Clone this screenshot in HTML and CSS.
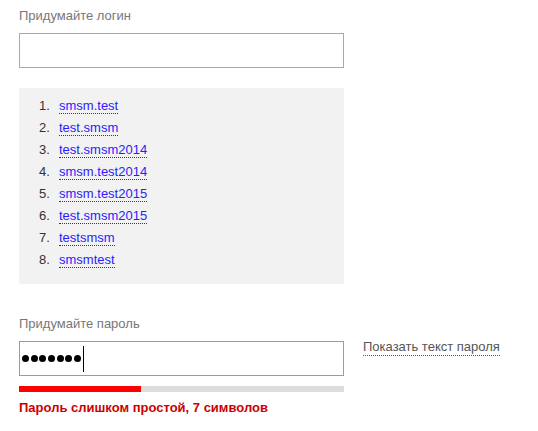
FILE: index.html
```html
<!DOCTYPE html>
<html lang="ru">
<head>
<meta charset="utf-8">
<title>Регистрация</title>
<link rel="stylesheet" href="styles.css">
</head>
<body>
<form class="form">
  <label class="label" for="login">Придумайте логин</label>
  <input class="field" id="login" type="text">

  <div class="suggest">
    <ol class="suggest-list">
      <li><a class="suggest-link" href="#">smsm.test</a></li>
      <li><a class="suggest-link" href="#">test.smsm</a></li>
      <li><a class="suggest-link" href="#">test.smsm2014</a></li>
      <li><a class="suggest-link" href="#">smsm.test2014</a></li>
      <li><a class="suggest-link" href="#">smsm.test2015</a></li>
      <li><a class="suggest-link" href="#">test.smsm2015</a></li>
      <li><a class="suggest-link" href="#">testsmsm</a></li>
      <li><a class="suggest-link" href="#">smsmtest</a></li>
    </ol>
  </div>

  <div class="label label-password">Придумайте пароль</div>
  <div class="pw-row">
    <div class="field field-focused" role="textbox" aria-label="Пароль">
      <span class="dot"></span><span class="dot"></span><span class="dot"></span><span class="dot"></span><span class="dot"></span><span class="dot"></span><span class="dot"></span><span class="caret"></span>
    </div>
    <a class="show-link" href="#">Показать текст пароля</a>
  </div>
  <div class="strength"><div class="strength-fill" style="width:122px"></div></div>
  <div class="error">Пароль слишком простой, 7 символов</div>
</form>
</body>
</html>
```

FILE: styles.css
```css
html, body {
  margin: 0;
  padding: 0;
  background: #fff;
}
body {
  font-family: "Liberation Sans", Arial, sans-serif;
  font-size: 13px;
  line-height: 15px;
}
.form {
  padding: 8px 19px 0;
}
.label {
  display: block;
  color: #777;
  line-height: 15px;
  margin-bottom: 10px;
}
.label-password {
  margin-top: 32px;
}
.field {
  display: block;
  box-sizing: border-box;
  width: 325px;
  height: 35px;
  margin: 0;
  border: 1px solid #a9a9a9;
  background: #fff;
  font: inherit;
  outline: none;
}
.suggest {
  margin-top: 20px;
  width: 325px;
  background: #f2f2f2;
  padding: 7px 0 13px;
}
.suggest-list {
  margin: 0;
  padding: 0 0 0 20px;
  list-style: none;
  counter-reset: n;
}
.suggest-list li {
  line-height: 22px;
  counter-increment: n;
}
.suggest-list li::before {
  content: counter(n) ".";
  display: inline-block;
  width: 20px;
  color: #333;
}
.suggest-link {
  color: #2a1cff;
  text-decoration: none;
  border-bottom: 1px dotted #2a1cff;
}
.pw-row {
  display: flex;
  align-items: flex-start;
}
.field-focused {
  display: flex;
  align-items: center;
  border-color: #76a0e6;
  padding-left: 2px;
}
.dot {
  width: 7px;
  height: 7px;
  border-radius: 50%;
  background: #000;
  margin-right: 1.7px;
  flex: none;
}
.caret {
  width: 1px;
  height: 26px;
  background: #000;
  margin-left: 0.5px;
}
.show-link {
  margin-left: 19px;
  margin-top: -2px;
  color: #555;
  text-decoration: none;
  border-bottom: 1px dotted #555;
  padding-bottom: 1px;
}
.strength {
  margin-top: 10px;
  width: 325px;
  height: 6px;
  background: #ddd;
}
.strength-fill {
  height: 6px;
  background: #f00;
}
.error {
  margin-top: 8px;
  color: #c00;
  font-weight: bold;
  line-height: 15px;
}
```
